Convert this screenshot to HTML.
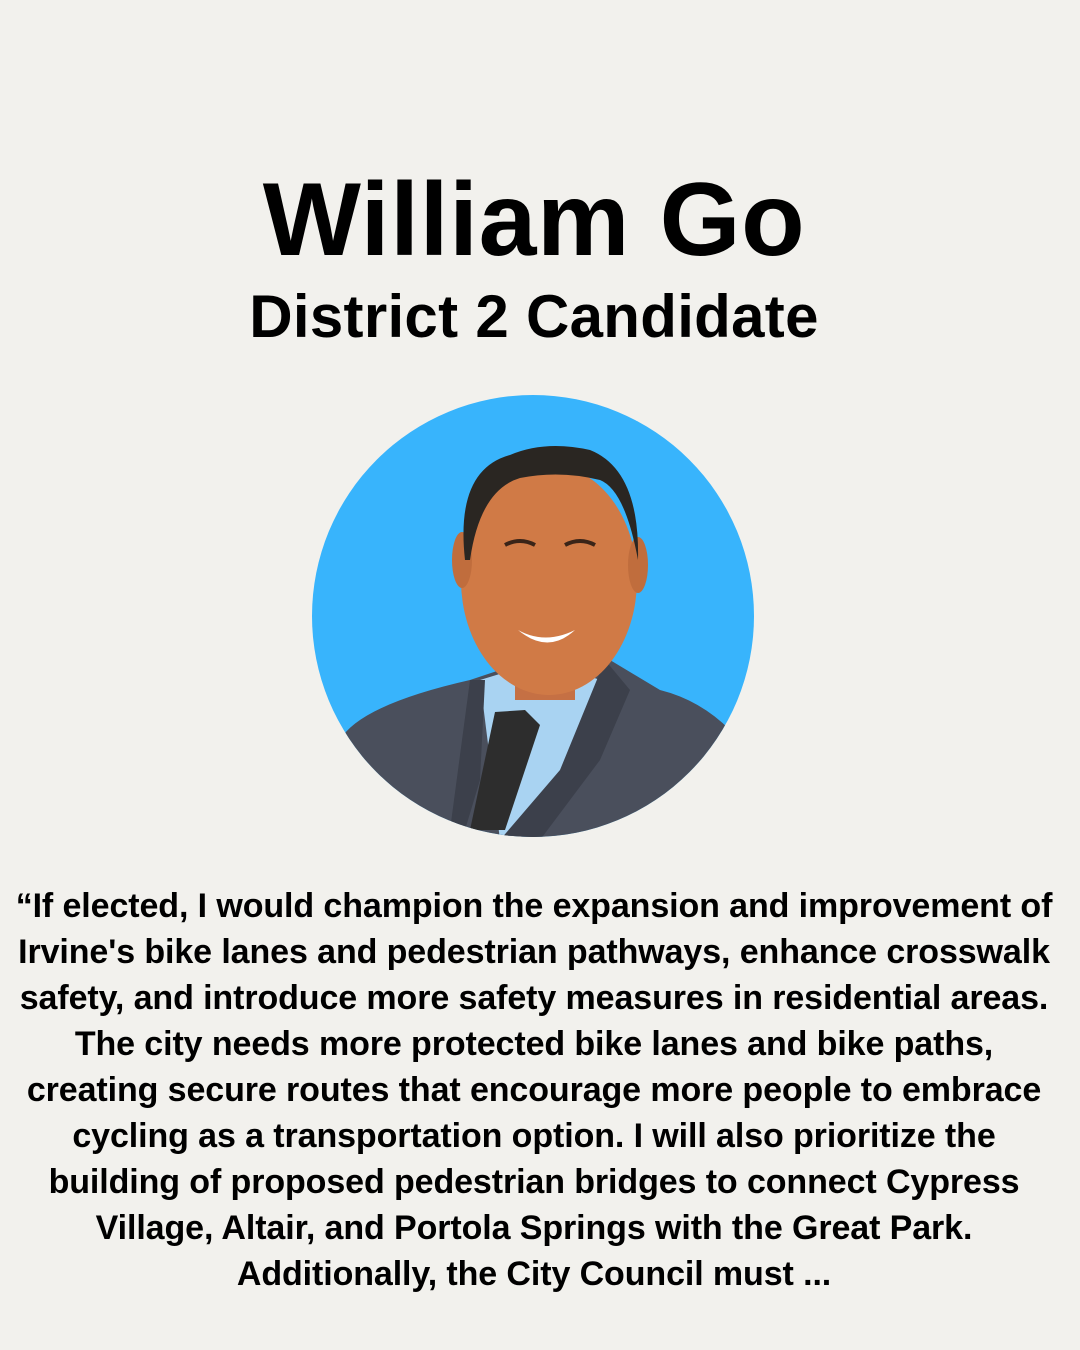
<!DOCTYPE html>
<html><head><meta charset="utf-8"><style>
html,body{margin:0;padding:0;}
body{width:1080px;height:1350px;background:#f2f1ed;position:relative;overflow:hidden;font-family:"Liberation Sans",sans-serif;color:#000;}
.t{position:absolute;left:-6px;width:1080px;text-align:center;font-weight:bold;white-space:nowrap;}
#name{top:160px;font-size:104px;line-height:120px;letter-spacing:0.6px;}
#sub{top:282px;font-size:60px;line-height:70px;letter-spacing:0.3px;}
#q{top:883px;font-size:34px;line-height:46px;letter-spacing:-0.1px;}
svg{position:absolute;left:0;top:0;}
</style></head><body>
<div class="t" id="name">William Go</div>
<div class="t" id="sub">District 2 Candidate</div>
<svg width="1080" height="1350">
<defs><clipPath id="c"><circle cx="533" cy="616" r="221"/></clipPath></defs>
<circle cx="533" cy="616" r="221" fill="#38b4fc"/>
<g clip-path="url(#c)">
<path d="M340 740 Q360 705 470 680 L500 670 L570 668 L610 660 L660 690 Q700 700 730 730 L760 850 L330 850 Z" fill="#4a4f5c"/>
<path d="M480 680 L545 660 L600 680 L560 780 L500 840 Z" fill="#a9d3f2"/>
<path d="M495 712 L525 710 L540 725 L505 830 L470 830 Z" fill="#2d2d2d"/>
<path d="M470 680 L485 680 L480 780 L465 830 L450 830 Z" fill="#3c404b"/>
<path d="M605 660 L630 690 L600 760 L540 840 L500 840 L560 770 Z" fill="#3c404b"/>
<rect x="515" y="640" width="60" height="60" fill="#c57044"/>
<ellipse cx="549" cy="580" rx="88" ry="115" fill="#d07a46"/>
<ellipse cx="462" cy="560" rx="10" ry="28" fill="#c06d3d"/>
<ellipse cx="638" cy="565" rx="10" ry="28" fill="#c06d3d"/>
<path d="M465 560 Q455 470 510 455 Q545 440 590 450 Q640 470 638 560 Q625 490 600 480 Q560 470 520 478 Q480 490 470 560 Z" fill="#2a2622"/>
<path d="M505 545 q15 -8 30 0" stroke="#3a2418" stroke-width="4" fill="none"/>
<path d="M565 545 q15 -8 30 0" stroke="#3a2418" stroke-width="4" fill="none"/>
<path d="M518 630 Q545 645 575 630 Q548 655 518 630 Z" fill="#fff"/>
</g>
</svg>
<div class="t" id="q">“If elected, I would champion the expansion and improvement of<br>Irvine's bike lanes and pedestrian pathways, enhance crosswalk<br>safety, and introduce more safety measures in residential areas.<br>The city needs more protected bike lanes and bike paths,<br>creating secure routes that encourage more people to embrace<br>cycling as a transportation option. I will also prioritize the<br>building of proposed pedestrian bridges to connect Cypress<br>Village, Altair, and Portola Springs with the Great Park.<br>Additionally, the City Council must ...</div>
</body></html>
